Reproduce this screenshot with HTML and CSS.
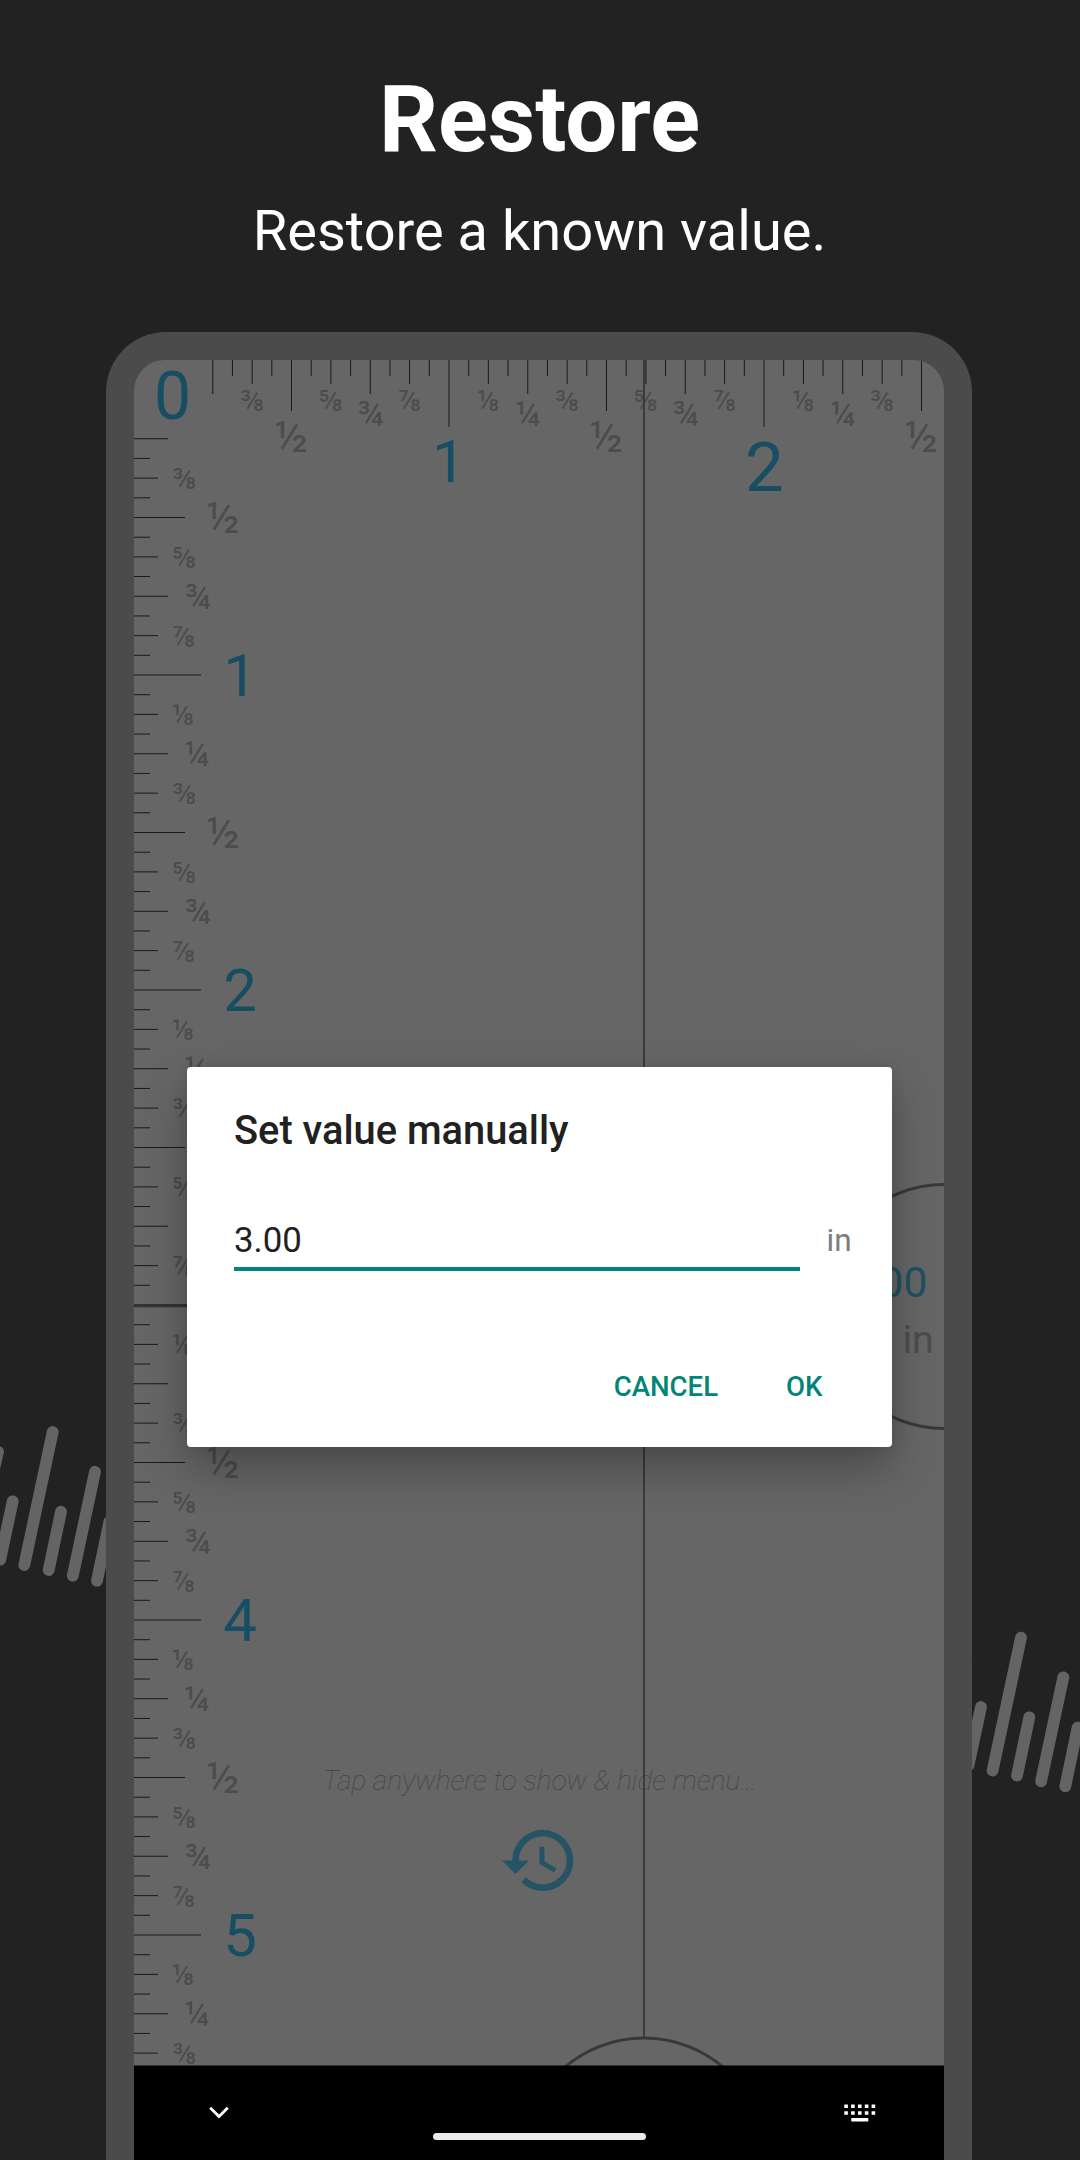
FILE: index.html
```html
<!DOCTYPE html>
<html lang="en">
<head>
<meta charset="utf-8">
<title>Restore</title>
<link rel="stylesheet" href="styles.css">
</head>
<body>
<svg class="waves" width="1080" height="2160" viewBox="0 0 1080 2160" aria-hidden="true">
  <defs>
    <path id="wave" d="M-2 1451.7L-26 1554.7M12.7 1501.3L.2 1559.7M52.7 1432L24.3 1565M61 1511.7L48.7 1570M95 1471.7L72.8 1575.7M109.3 1522L97 1580.7"/>
  </defs>
  <use href="#wave"/>
  <use href="#wave" x="968.3" y="205.6"/>
</svg>
<main class="page">
  <header class="intro">
    <h1 class="intro-title">Restore</h1>
    <p class="intro-text">Restore a known value.</p>
  </header>
  <section class="phone">
    <div class="screen">
      <svg class="ruler" width="810" height="1706" viewBox="0 0 810 1706">
        <defs>
          <!-- one inch is 315 units, split into sixteenths -->
          <path id="v-start" d="M0 0h67M0 19.69h16M0 39.38h24M0 59.06h16"/>
          <path id="v-rest" d="M0 78.75h34M0 98.44h16M0 118.13h24M0 137.81h16M0 157.5h51M0 177.19h16M0 196.88h24M0 216.56h16M0 236.25h34M0 255.94h16M0 275.63h24M0 295.31h16"/>
          <path id="h-start" d="M0 0v67M19.69 0v16M39.38 0v24M59.06 0v16"/>
          <path id="h-rest" d="M78.75 0v34M98.44 0v16M118.13 0v24M137.81 0v16M157.5 0v51M177.19 0v16M196.88 0v24M216.56 0v16M236.25 0v34M255.94 0v16M275.63 0v24M295.31 0v16"/>
        </defs>
        <g class="ticks">
          <use href="#h-rest"/>
          <use href="#h-start" x="315"/><use href="#h-rest" x="315"/>
          <use href="#h-start" x="630"/><use href="#h-rest" x="630"/>
          <use href="#v-rest"/>
          <use href="#v-start" y="315"/><use href="#v-rest" y="315"/>
          <use href="#v-start" y="630"/><use href="#v-rest" y="630"/>
          <use href="#v-start" y="945"/><use href="#v-rest" y="945"/>
          <use href="#v-start" y="1260"/><use href="#v-rest" y="1260"/>
          <use href="#v-start" y="1575"/><use href="#v-rest" y="1575"/>
        </g>
        <g class="fraction middle">
          <text class="eighth" y="50.5" x="118.1 196.9 275.6 354.4 433.1 511.9 590.6 669.4 748.1">⅜⅝⅞⅛⅜⅝⅞⅛⅜</text>
          <text class="quarter" y="65.5" x="236.3 393.8 551.3 708.8">¾¼¾¼</text>
          <text class="half" y="91.5" x="157.5 472.5 787.5">½½½</text>
        </g>
        <g class="fraction">
          <g class="eighth">
            <text x="38" y="129">⅜</text><text x="38" y="207.8">⅝</text><text x="38" y="286.5">⅞</text>
            <text x="38" y="365.3">⅛</text><text x="38" y="444">⅜</text><text x="38" y="522.8">⅝</text><text x="38" y="601.5">⅞</text>
            <text x="38" y="680.3">⅛</text><text x="38" y="759">⅜</text><text x="38" y="837.8">⅝</text><text x="38" y="916.5">⅞</text>
            <text x="38" y="995.3">⅛</text><text x="38" y="1074">⅜</text><text x="38" y="1152.8">⅝</text><text x="38" y="1231.5">⅞</text>
            <text x="38" y="1310.3">⅛</text><text x="38" y="1389">⅜</text><text x="38" y="1467.8">⅝</text><text x="38" y="1546.5">⅞</text>
            <text x="38" y="1625.3">⅛</text><text x="38" y="1704">⅜</text>
          </g>
          <g class="quarter">
            <text x="50.3" y="248.5">¾</text>
            <text x="50.3" y="406">¼</text><text x="50.3" y="563.5">¾</text>
            <text x="50.3" y="721">¼</text>
            <text x="50.3" y="1193.5">¾</text>
            <text x="50.3" y="1351">¼</text><text x="50.3" y="1508.5">¾</text>
            <text x="50.3" y="1666">¼</text>
          </g>
          <g class="half">
            <text x="72.3" y="172.5">½</text><text x="72.3" y="487.5">½</text><text x="72.3" y="1117.5">½</text><text x="72.3" y="1432.5">½</text>
          </g>
        </g>
        <g class="inch middle">
          <text class="inch-zero" x="38.6" y="58.7">0</text>
          <text x="314.8" y="121.7">1</text>
          <text class="inch-active" x="630.3" y="130.7">2</text>
          <text x="106" y="336">1</text>
          <text x="106" y="651">2</text>
          <text x="106" y="1281">4</text>
          <text x="106" y="1596">5</text>
        </g>
        <text class="hint" x="405.8" y="1429.7">Tap anywhere to show &amp; hide menu…</text>
        <path class="history" transform="translate(364.6 1459.6) scale(3.4)" d="M13 3a9 9 0 0 0-9 9H1l3.89 3.89.07.14L9 12H6c0-3.87 3.13-7 7-7s7 3.13 7 7-3.13 7-7 7c-1.93 0-3.68-.79-4.94-2.06l-1.42 1.42A8.954 8.954 0 0 0 13 21a9 9 0 0 0 0-18zm-1 5v5l4.28 2.54.72-1.21-3.5-2.08V8z"/>
        <path class="guide" d="M510 0v1677"/>
        <path class="guide-wide" d="M0 945.6h688"/>
        <circle class="handle" cx="510" cy="1800" r="122"/>
        <circle class="handle" cx="810" cy="946.5" r="122"/>
        <text class="reading" x="793.3" y="937.3">3.00</text>
        <text class="reading-unit" x="768.5" y="992.5">in</text>
        <path d="M0 1705.5h810v.5H0z"/>
      </svg>
      <nav class="navbar">
        <svg class="nav-icon" width="32" height="24" viewBox="0 0 32 24"><path class="chevron" d="M7.200 7.700L16 16.500l8.800-8.800"/></svg>
        <span class="home-pill"></span>
        <svg class="nav-icon" width="32" height="24" viewBox="0 0 32 24"><path class="keys" d="M.3 4.500h3.600v3.600H.3zM7.100 4.500h3.600v3.600H7.100zM14 4.500h3.600v3.600H14zM20.800 4.500h3.600v3.600h-3.600zM27.600 4.500h3.600v3.600h-3.600zM.3 11.200h3.600v3.600H.3zM7.100 11.200h3.600v3.600H7.100zM14 11.200h3.600v3.600H14zM20.800 11.200h3.600v3.600h-3.600zM27.600 11.200h3.600v3.600h-3.600zM7.300 18h17v3.600h-17z"/></svg>
      </nav>
      <div class="dialog" role="dialog">
        <h2 class="dialog-title">Set value manually</h2>
        <div class="field">
          <div class="field-value">3.00</div>
          <div class="field-unit">in</div>
        </div>
        <div class="actions">
          <span class="action">CANCEL</span>
          <span class="action">OK</span>
        </div>
      </div>
    </div>
  </section>
</main>
</body>
</html>
```
FILE: styles.css
```css
* { box-sizing: border-box; }

body {
  margin: 0;
  width: 1080px;
  height: 2160px;
  overflow: hidden;
  position: relative;
  background: #222;
  color: #fff;
  font-family: Roboto, "Noto Sans", sans-serif;
}

.waves {
  position: absolute;
  left: 0;
  top: 0;
  fill: none;
  stroke: #646464;
  stroke-width: 11.8;
  stroke-linecap: round;
}

.page {
  position: relative;
  display: flex;
  flex-direction: column;
  align-items: center;
  height: 2160px;
  padding-top: 66px;
}

.intro { height: 266px; margin-right: 1px; text-align: center; }
.intro-title { margin: 0; font-size: 92.2px; line-height: 108px; font-weight: 700; }
.intro-text { margin: 24px 0 0; font-size: 56px; line-height: 66px; }

.phone {
  width: 866px;
  height: 1828px;
  margin-right: 2px;
  padding: 28px 28px 0;
  border-radius: 60px 60px 0 0;
  background: #4b4b4b;
}

.screen {
  position: relative;
  height: 1800px;
  border-radius: 31px 31px 0 0;
  overflow: hidden;
  background: #666;
}

.ruler { display: block; }
.ticks { fill: none; stroke: #1a1a1a; stroke-width: 1; }
.middle { text-anchor: middle; }
.fraction { fill: #4c4c4c; font-weight: 400; }
.eighth { font-size: 29px; }
.quarter { font-size: 34.5px; }
.half { font-size: 43.5px; }
.inch { fill: #174e63; font-size: 60px; }
.inch-zero { font-size: 66px; }
.inch-active { font-size: 69px; }
.hint { fill: #444; font-size: 28px; font-style: italic; font-weight: 100; text-anchor: middle; }
.history { fill: #265465; }
.guide { stroke: #3b3b3b; stroke-width: 2; }
.guide-wide { stroke: #333; stroke-width: 3.3; }
.handle { fill: none; stroke: #383838; stroke-width: 3; }
.reading { fill: #1f5161; font-size: 42.5px; text-anchor: end; }
.reading-unit { fill: #4c4c4c; font-size: 39.4px; }

.navbar {
  display: flex;
  justify-content: space-between;
  height: 94px;
  padding: 34px 68px 0 69px;
  background: #000;
}
.nav-icon { display: block; }
.chevron { fill: none; stroke: #fff; stroke-width: 2.8; }
.keys { fill: #fff; }
.home-pill { width: 213px; height: 7px; margin-top: 33px; border-radius: 4px; background: #ebebeb; }

.dialog {
  position: absolute;
  left: 52.5px;
  top: 707.3px;
  width: 705px;
  height: 379.3px;
  padding: 37px 38px 0 47.5px;
  border-radius: 4px;
  background: #fff;
  box-shadow: 0 22px 46px rgba(0, 0, 0, .28), 0 0 14px rgba(0, 0, 0, .1);
}
.dialog-title { margin: 0; font-size: 39.8px; line-height: 54px; font-weight: 500; color: #212121; }
.field { display: flex; gap: 26.5px; margin-top: 51px; }
.field-value { width: 566px; height: 62px; border-bottom: 4px solid #008577; font-size: 34.8px; line-height: 62px; color: #212121; }
.field-unit { font-size: 31.5px; line-height: 64px; color: #7d7d7d; }
.actions { display: flex; justify-content: flex-end; gap: 68px; margin-top: 96px; padding-right: 31px; }
.action { font-size: 27.6px; line-height: 36px; font-weight: 500; color: #008577; }
```
